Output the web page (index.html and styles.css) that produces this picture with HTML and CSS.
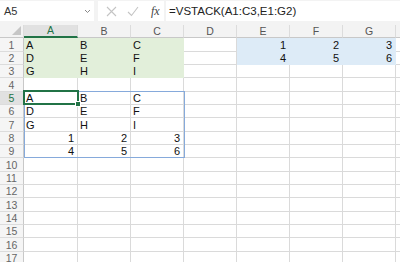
FILE: index.html
```html
<!DOCTYPE html>
<html lang="en">
<head>
  <meta charset="UTF-8" />
  <title>VSTACK</title>
  <link rel="stylesheet" href="styles.css">
</head>
<body>
  <div class="formula-bar">
    <div class="name-box">
      <span>A5</span>
      <svg class="chev" width="7" height="5" viewBox="0 0 7 5"><path d="M1 1 L3.5 3.5 L6 1" fill="none" stroke="#888" stroke-width="1"/></svg>
    </div>
    <div class="sep"></div>
    <div class="fx-buttons">
      <svg width="11" height="11" viewBox="0 0 11 11"><path d="M1 1 L10 10 M10 1 L1 10" stroke="#c4c4c4" stroke-width="1.1"/></svg>
      <svg width="12" height="11" viewBox="0 0 12 11"><path d="M1 6 L4.5 9.5 L11 1" fill="none" stroke="#c4c4c4" stroke-width="1.1"/></svg>
      <span class="fx">fx</span>
    </div>
    <div class="formula">=VSTACK(A1:C3,E1:G2)</div>
  </div>

  <div class="sheet">
    <table class="grid">
      <colgroup>
        <col class="c-rh"><col class="c-a"><col><col><col><col><col><col><col>
      </colgroup>
      <tr class="head">
        <th class="corner"><span class="tri"></span></th>
        <th class="sel">A</th><th>B</th><th>C</th><th>D</th><th>E</th><th>F</th><th>G</th><th></th>
      </tr>
      <tr class="tall"><td class="rh">1</td><td class="g">A</td><td class="g">B</td><td class="g">C</td><td></td><td class="b num">1</td><td class="b num">2</td><td class="b num">3</td><td></td></tr>
      <tr><td class="rh">2</td><td class="g">D</td><td class="g">E</td><td class="g">F</td><td></td><td class="b num">4</td><td class="b num">5</td><td class="b num">6</td><td></td></tr>
      <tr><td class="rh">3</td><td class="g">G</td><td class="g">H</td><td class="g">I</td><td></td><td></td><td></td><td></td><td></td></tr>
      <tr class="tall"><td class="rh">4</td><td></td><td></td><td></td><td></td><td></td><td></td><td></td><td></td></tr>
      <tr><td class="rh sel">5</td><td>A</td><td>B</td><td>C</td><td></td><td></td><td></td><td></td><td></td></tr>
      <tr><td class="rh">6</td><td>D</td><td>E</td><td>F</td><td></td><td></td><td></td><td></td><td></td></tr>
      <tr class="tall"><td class="rh">7</td><td>G</td><td>H</td><td>I</td><td></td><td></td><td></td><td></td><td></td></tr>
      <tr><td class="rh">8</td><td class="num">1</td><td class="num">2</td><td class="num">3</td><td></td><td></td><td></td><td></td><td></td></tr>
      <tr><td class="rh">9</td><td class="num">4</td><td class="num">5</td><td class="num">6</td><td></td><td></td><td></td><td></td><td></td></tr>
      <tr class="tall"><td class="rh">10</td><td></td><td></td><td></td><td></td><td></td><td></td><td></td><td></td></tr>
      <tr><td class="rh">11</td><td></td><td></td><td></td><td></td><td></td><td></td><td></td><td></td></tr>
      <tr><td class="rh">12</td><td></td><td></td><td></td><td></td><td></td><td></td><td></td><td></td></tr>
      <tr class="tall"><td class="rh">13</td><td></td><td></td><td></td><td></td><td></td><td></td><td></td><td></td></tr>
      <tr><td class="rh">14</td><td></td><td></td><td></td><td></td><td></td><td></td><td></td><td></td></tr>
      <tr><td class="rh">15</td><td></td><td></td><td></td><td></td><td></td><td></td><td></td><td></td></tr>
      <tr class="tall"><td class="rh">16</td><td></td><td></td><td></td><td></td><td></td><td></td><td></td><td></td></tr>
      <tr><td class="rh">17</td><td></td><td></td><td></td><td></td><td></td><td></td><td></td><td></td></tr>
    </table>
    <div class="spill"></div>
    <div class="active"><span class="handle"></span></div>
  </div>
</body>
</html>
```

FILE: styles.css
```css
html, body { margin: 0; padding: 0; }
body { width: 400px; height: 262px; overflow: hidden; background: #f3f3f3; font-family: "Liberation Sans", Arial, sans-serif; color: #222; }

.formula-bar { display: flex; align-items: stretch; height: 20px; padding-top: 1px; margin-bottom: 4px; }
.name-box { width: 87px; background: #fff; display: flex; align-items: center; justify-content: space-between; padding: 0 3px 0 4px; font-size: 11px; color: #333; }
.chev { margin-top: 1px; }
.sep { width: 4px; }
.fx-buttons { width: 66px; background: #fff; display: flex; align-items: center; gap: 10px; padding-left: 8px; box-sizing: border-box; }
.fx { font-family: "Liberation Serif", serif; font-style: italic; font-size: 12px; color: #444; margin-left: 2px; }
.formula { flex: 1; background: #fff; margin-left: 2px; padding-left: 3px; font-size: 11.5px; line-height: 20px; color: #222; white-space: nowrap; }

.sheet { position: relative; background: #fff; width: 400px; height: 237px; overflow: hidden; }
.grid { border-collapse: separate; border-spacing: 0; table-layout: fixed; width: 449px; font-size: 11px; }
.grid col { width: 53px; }
.grid col.c-rh { width: 24px; }
.grid col.c-a { width: 54px; }

.grid tr { height: 13px; }
.grid tr.tall { height: 14px; }
.grid tr.head { height: 12px; }

.grid th { background: #f3f3f3; color: #555; font-weight: normal; font-size: 10.5px; line-height: 11px; padding: 0; border-right: 1px solid #dcdcdc; border-bottom: 1px solid #c8c8c8; }
.grid th.sel { background: #e1e1e1; color: #217346; border-bottom: 2px solid #217346; }
.grid th.corner { position: relative; }
.tri { position: absolute; right: 2px; bottom: 2px; width: 0; height: 0; border-left: 9px solid transparent; border-bottom: 9px solid #c6c6c6; }

.grid td { padding: 0 2px 0 2px; border-right: 1px solid #dadada; border-bottom: 1px solid #dadada; line-height: 12px; vertical-align: bottom; white-space: nowrap; overflow: hidden; color: #111; }
.grid td.rh { background: #f5f5f5; color: #666; font-size: 10.5px; text-align: center; border-right-color: #c8c8c8; border-bottom-color: #dcdcdc; }
.grid td.rh.sel { background: #e1e1e1; color: #217346; }
.grid td.num { text-align: right; padding-right: 3px; }
.grid td.g { background: #e2efda; border-color: #e2efda; }
.grid td.b { background: #ddebf7; border-color: #ddebf7; }

.spill { position: absolute; left: 24px; top: 66px; width: 159px; height: 65px; border: 1px solid #86aadb; pointer-events: none; }
.active { position: absolute; left: 23px; top: 65px; width: 52px; height: 11px; border: 2px solid #217346; pointer-events: none; }
.handle { position: absolute; right: -4px; bottom: -4px; width: 4px; height: 4px; background: #217346; border: 1px solid #fff; }
```
